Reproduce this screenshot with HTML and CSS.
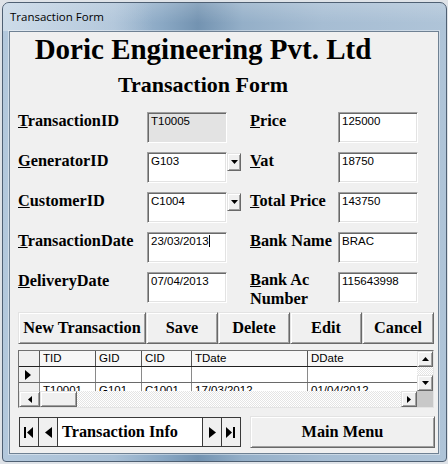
FILE: index.html
```html
<!DOCTYPE html>
<html>
<head>
<meta charset="utf-8">
<link rel="stylesheet" href="styles.css">
</head>
<body>
<div class="window">
  <div class="titlebar"><span class="title">Transaction Form</span></div>
  <div class="client">
    <div class="header">
      <h1 class="company">Doric Engineering Pvt. Ltd</h1>
      <h2 class="subtitle">Transaction Form</h2>
    </div>

    <div class="form">
      <div class="lbl"><u>T</u>ransactionID</div>
      <div class="box readonly">T10005</div>
      <div class="ddcell"></div>
      <div class="lbl"><u>P</u>rice</div>
      <div class="box">125000</div>

      <div class="lbl"><u>G</u>eneratorID</div>
      <div class="box">G103</div>
      <div class="ddcell"><div class="dd"><svg width="7" height="4" viewBox="0 0 7 4"><path d="M0 0H7L3.5 4Z" fill="#000"/></svg></div></div>
      <div class="lbl"><u>V</u>at</div>
      <div class="box">18750</div>

      <div class="lbl"><u>C</u>ustomerID</div>
      <div class="box">C1004</div>
      <div class="ddcell"><div class="dd"><svg width="7" height="4" viewBox="0 0 7 4"><path d="M0 0H7L3.5 4Z" fill="#000"/></svg></div></div>
      <div class="lbl"><u>T</u>otal Price</div>
      <div class="box">143750</div>

      <div class="lbl"><u>T</u>ransactionDate</div>
      <div class="box">23/03/2013<span class="caret"></span></div>
      <div class="ddcell"></div>
      <div class="lbl"><u>B</u>ank Name</div>
      <div class="box">BRAC</div>

      <div class="lbl"><u>D</u>eliveryDate</div>
      <div class="box">07/04/2013</div>
      <div class="ddcell"></div>
      <div class="lbl lbl2"><span><u>B</u>ank Ac</span><span>Number</span></div>
      <div class="box">115643998</div>
    </div>

    <div class="actions">
      <div class="btn w-new">New Transaction</div>
      <div class="btn w-std">Save</div>
      <div class="btn w-std">Delete</div>
      <div class="btn w-std">Edit</div>
      <div class="btn w-std">Cancel</div>
    </div>

    <div class="datagrid">
      <div class="dg-body">
        <div class="dg-view">
          <div class="dg-row dg-head">
            <div class="c c-sel"></div>
            <div class="c c-tid">TID</div>
            <div class="c c-gid">GID</div>
            <div class="c c-cid">CID</div>
            <div class="c c-td">TDate</div>
            <div class="c c-dd">DDate</div>
          </div>
          <div class="dg-row">
            <div class="c c-sel"><svg width="6" height="10" viewBox="0 0 6 10"><path d="M0 0L6 5L0 10Z" fill="#000"/></svg></div>
            <div class="c c-tid"></div>
            <div class="c c-gid"></div>
            <div class="c c-cid"></div>
            <div class="c c-td"></div>
            <div class="c c-dd"></div>
          </div>
          <div class="dg-row">
            <div class="c c-sel"></div>
            <div class="c c-tid">T10001</div>
            <div class="c c-gid">G101</div>
            <div class="c c-cid">C1001</div>
            <div class="c c-td">17/03/2012</div>
            <div class="c c-dd">01/04/2012</div>
          </div>
        </div>
        <div class="vscroll">
          <div class="sb-btn"><svg width="7" height="4" viewBox="0 0 7 4"><path d="M3.5 0L7 4H0Z" fill="#000"/></svg></div>
          <div class="sb-track"></div>
          <div class="sb-btn"><svg width="7" height="4" viewBox="0 0 7 4"><path d="M0 0H7L3.5 4Z" fill="#000"/></svg></div>
        </div>
      </div>
      <div class="hscroll">
        <div class="sb-btn sb-left"><svg width="4" height="7" viewBox="0 0 4 7"><path d="M4 0V7L0 3.5Z" fill="#000"/></svg></div>
        <div class="sb-thumb"></div>
        <div class="sb-track"></div>
        <div class="sb-btn"><svg width="4" height="7" viewBox="0 0 4 7"><path d="M0 0V7L4 3.5Z" fill="#000"/></svg></div>
        <div class="sb-corner"></div>
      </div>
    </div>

    <div class="bottom">
      <div class="nav">
        <div class="nav-btn nb-l"><svg width="10" height="11" viewBox="0 0 10 11"><rect x="0" y="0" width="2" height="11" fill="#000"/><path d="M9 0V11L3 5.5Z" fill="#000"/></svg></div>
        <div class="nav-btn nb-l"><svg width="7" height="11" viewBox="0 0 7 11"><path d="M7 0V11L0 5.5Z" fill="#000"/></svg></div>
        <div class="nav-label">Transaction Info</div>
        <div class="nav-btn nb-r"><svg width="7" height="11" viewBox="0 0 7 11"><path d="M0 0V11L7 5.5Z" fill="#000"/></svg></div>
        <div class="nav-btn nb-r"><svg width="10" height="11" viewBox="0 0 10 11"><path d="M0 0V11L6 5.5Z" fill="#000"/><rect x="7" y="0" width="2" height="11" fill="#000"/></svg></div>
      </div>
      <div class="btn w-menu">Main Menu</div>
    </div>
  </div>
</div>
</body>
</html>
```

FILE: styles.css
```css
* { box-sizing: border-box; }
html, body { margin: 0; padding: 0; }
body {
  width: 448px;
  height: 464px;
  overflow: hidden;
  background: #dfe3e8;
  font-family: "Liberation Serif", serif;
  color: #000;
}

.window {
  margin: 2px 0 0 2px;
  width: 445px;
  height: 460px;
  border: 1px solid #4f6073;
  border-radius: 7px 7px 4px 4px;
  background:
    linear-gradient(180deg, rgba(255,255,255,0.18) 0, rgba(255,255,255,0) 20px),
    linear-gradient(90deg, #b3c8dc 0%, #a9c0d6 25%, #8aa8c4 36%, #7393b1 44%, #94afc8 54%, #a6bdd3 72%, #afc4d8 100%);
  padding: 0 7px 7px 6px;
  display: flex;
  flex-direction: column;
}

.titlebar {
  height: 28px;
  flex: none;
  padding: 4px 0 0 7px;
  margin: 0 -7px 0 -6px;
  background: linear-gradient(90deg, rgba(214,226,237,0.75) 0, rgba(200,215,230,0.5) 90px, rgba(255,255,255,0) 150px);
  border-radius: 6px 6px 0 0;
}
.title {
  font-family: "Open Sans", "Noto Sans", sans-serif;
  font-size: 11.5px;
  line-height: 16px;
  color: #000;
}

.client {
  flex: 1;
  background: #f0f0f0;
  border: 1px solid #6f8193;
  box-shadow: 0 0 0 1px rgba(255,255,255,0.4);
  padding: 0 0 0 8px;
  display: flex;
  flex-direction: column;
}

.header {
  width: 370px;
  text-align: center;
}
.company {
  margin: 0;
  font-size: 29px;
  line-height: 34px;
  font-weight: bold;
}
.subtitle {
  margin: 6px 0 0;
  font-size: 22px;
  line-height: 26px;
  font-weight: bold;
}

.form {
  margin-top: 14px;
  display: grid;
  grid-template-columns: 129px 80px 23px 88px 80px;
  grid-auto-rows: 31px;
  row-gap: 9px;
}
.lbl {
  font-size: 16.3px;
  font-weight: bold;
  line-height: 17px;
  align-self: start;
}
.lbl2 { display: flex; flex-direction: column; line-height: 18.5px; margin-top: -1px; }
.lbl u { text-decoration-thickness: 1px; text-underline-offset: 1px; }

.box {
  background: #fff;
  border: 1px solid;
  border-color: #a0a0a0 #fff #fff #a0a0a0;
  box-shadow: inset 1px 1px 0 #696969, inset -1px -1px 0 #e3e3e3;
  font-family: "Liberation Sans", Arial, sans-serif;
  font-size: 11.5px;
  line-height: 13px;
  padding: 2px 2px 0 3px;
  white-space: nowrap;
}
.box.readonly { background: #e3e3e3; }
.caret {
  display: inline-block;
  width: 1px;
  height: 12px;
  background: #000;
  vertical-align: -2px;
}

.dd {
  width: 14px;
  height: 18px;
  margin-top: 1px;
  background: #f0f0f0;
  border: 1px solid;
  border-color: #e3e3e3 #696969 #696969 #e3e3e3;
  box-shadow: inset 1px 1px 0 #fff, inset -1px -1px 0 #a0a0a0;
  display: flex;
  align-items: center;
  justify-content: center;
}
.dd svg { display: block; }

.btn {
  background: #f0f0f0;
  border: 1px solid;
  border-color: #e3e3e3 #696969 #696969 #e3e3e3;
  box-shadow: inset 1px 1px 0 #fff, inset -1px -1px 0 #a0a0a0;
  font-family: "Liberation Serif", serif;
  font-size: 16.3px;
  font-weight: bold;
  display: flex;
  align-items: center;
  justify-content: center;
  white-space: nowrap;
  height: 32px;
}

.actions {
  margin-top: 9px;
  display: flex;
}
.w-new { width: 128px; }
.w-std { width: 72px; }

.datagrid {
  margin-top: 6px;
  width: 416px;
  height: 58px;
  border: 1px solid;
  border-color: #707070 #e3e3e3 #e3e3e3 #707070;
  display: flex;
  flex-direction: column;
  background: #fff;
}
.dg-body {
  display: flex;
  height: 40px;
}
.dg-view {
  width: 398px;
  height: 40px;
  overflow: hidden;
  font-family: "Liberation Sans", Arial, sans-serif;
  font-size: 11.5px;
}
.dg-row {
  display: flex;
  height: 16px;
  border-bottom: 1px solid #6a6a6a;
}
.dg-head {
  background: #f7f7f7;
  border-bottom-color: #222;
}
.c {
  height: 100%;
  border-right: 1px solid #8a8a8a;
  padding: 0 0 0 3px;
  line-height: 15px;
  white-space: nowrap;
  overflow: hidden;
}
.dg-head .c { border-right-color: #555; }
.c-sel {
  width: 21px;
  background: #f0f0f0;
  display: flex;
  align-items: center;
  padding-left: 6px;
}
.c-tid { width: 56px; }
.c-gid { width: 46px; }
.c-cid { width: 50px; }
.c-td { width: 116px; }
.c-dd { width: 109px; border-right: none; }

.vscroll {
  width: 16px;
  display: flex;
  flex-direction: column;
}
.sb-btn {
  width: 16px;
  height: 16px;
  flex: none;
  background: #f0f0f0;
  border: 1px solid;
  border-color: #e3e3e3 #696969 #696969 #e3e3e3;
  box-shadow: inset 1px 1px 0 #fff, inset -1px -1px 0 #a0a0a0;
  display: flex;
  align-items: center;
  justify-content: center;
}
.sb-btn svg { display: block; }
.sb-left { width: 21px; }
.sb-track {
  flex: 1;
  background: repeating-conic-gradient(#ffffff 0 25%, #e4e4e4 0 50%) 0 0 / 2px 2px;
}
.hscroll {
  display: flex;
  height: 16px;
}
.sb-thumb {
  width: 37px;
  height: 16px;
  background: #f0f0f0;
  border: 1px solid;
  border-color: #e3e3e3 #696969 #696969 #e3e3e3;
  box-shadow: inset 1px 1px 0 #fff, inset -1px -1px 0 #a0a0a0;
}
.sb-corner {
  width: 16px;
  height: 16px;
  background: #c8c8c8;
}

.bottom {
  margin-top: 8px;
  display: flex;
  align-items: center;
  height: 32px;
}
.nav {
  margin-left: 1px;
  width: 222px;
  height: 30px;
  border: 1px solid #3a3a3a;
  background: #fff;
  display: flex;
}
.nav-btn {
  width: 19px;
  flex: none;
  background: #f0f0f0;
  display: flex;
  align-items: center;
  justify-content: center;
}
.nav-btn svg { display: block; }
.nb-l { border-right: 1px solid #3a3a3a; }
.nb-r { border-left: 1px solid #3a3a3a; }
.nav-label {
  flex: 1;
  font-size: 16.3px;
  font-weight: bold;
  display: flex;
  align-items: center;
  padding-left: 4px;
  white-space: nowrap;
}
.w-menu {
  margin-left: 9px;
  width: 185px;
}
```
